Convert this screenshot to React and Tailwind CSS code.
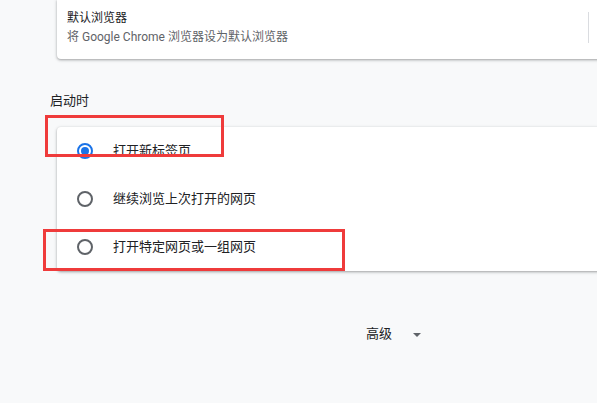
const Radio = ({ checked }) => (
  <div
    className={`w-4 h-4 rounded-full border-2 flex items-center justify-center shrink-0 ${
      checked ? "border-[#1a73e8]" : "border-[#5f6368]"
    }`}
  >
    {checked && <div className="w-2 h-2 rounded-full bg-[#1a73e8]" />}
  </div>
);

const App = () => {
  const options = [
    { id: 1, label: "打开新标签页", checked: true },
    { id: 2, label: "继续浏览上次打开的网页", checked: false },
    { id: 3, label: "打开特定网页或一组网页", checked: false },
  ];

  return (
    <div
      className="relative w-full h-[403px] overflow-hidden bg-[#f8f9fa] text-[13px] text-[#202124]"
      style={{ fontFamily: 'Roboto, "Noto Sans CJK SC", sans-serif' }}
    >
      {/* default browser card */}
      <div className="ml-[57px] w-[620px] bg-white rounded-b-[4px] shadow-[0_1px_2px_0_rgba(60,64,67,0.3),0_1px_3px_1px_rgba(60,64,67,0.15)] flex pl-[10px] pt-[8px] pb-[12px] text-[12px]">
        <div className="w-[521px] shrink-0">
          <div className="leading-[20px]">默认浏览器</div>
          <div className="leading-[20px] mt-[-1px] text-[#5f6368]">将 Google Chrome 浏览器设为默认浏览器</div>
        </div>
        <div className="w-px h-[31px] mt-[4px] bg-[#dadce0]" />
      </div>

      <div className="pl-[50px] mt-[32px] leading-[20px]">启动时</div>

      {/* on startup card */}
      <div className="ml-[57px] mt-[16px] w-[620px] bg-white rounded-[4px] shadow-[0_1px_2px_0_rgba(60,64,67,0.3),0_1px_3px_1px_rgba(60,64,67,0.15)]">
        {options.map((item) => (
          <div key={item.id} className="h-[48px] flex items-center pl-[20px] gap-[20px]">
            <Radio checked={item.checked} />
            <span>{item.label}</span>
          </div>
        ))}
      </div>

      <div className="pl-[366px] mt-[53px] flex items-center h-[20px]">
        <span>高级</span>
        <svg className="ml-[21px] mt-[1px]" width="8" height="4" viewBox="0 0 8 4">
          <path d="M0 0h8L4 4z" fill="#5f6368" />
        </svg>
      </div>

      {/* annotation boxes */}
      <div className="absolute left-[45px] top-[115px] w-[179px] h-[42px] border-[3px] border-[#ef3b3b]" />
      <div className="absolute left-[43px] top-[229px] w-[302px] h-[42px] border-[3px] border-[#ef3b3b]" />
    </div>
  );
};

export default App;
